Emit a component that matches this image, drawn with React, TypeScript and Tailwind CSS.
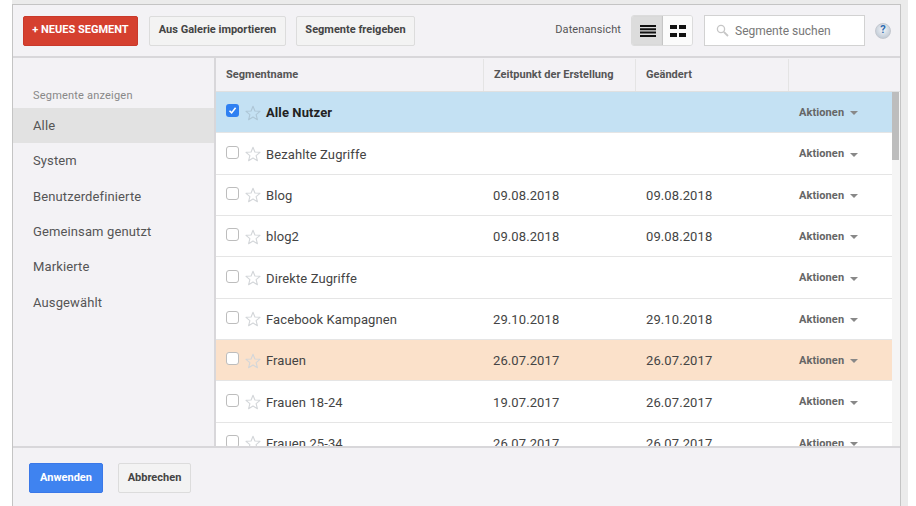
import React from "react";

const Star = ({ on }: { on?: boolean }) => (
  <svg width="16" height="16" viewBox="0 0 16 16" className="shrink-0 -mt-[1px]">
    <path d="M8 1.2 L9.9 6 L15 6.3 L11.1 9.6 L12.4 14.7 L8 12 L3.6 14.7 L4.9 9.6 L1 6.3 L6.1 6 Z" fill="none" stroke={on ? "#aec6d6" : "#d3d6d9"} strokeWidth="1.1" strokeLinejoin="round" />
  </svg>
);

const Check = ({ on }: { on?: boolean }) =>
  on ? (
    <span className="w-[13px] h-[13px] rounded-[3px] bg-[#2f80f2] flex items-center justify-center shrink-0 -mt-[5px]">
      <svg width="9" height="9" viewBox="0 0 9 9"><path d="M1.5 4.8 L3.6 6.9 L7.6 1.8" fill="none" stroke="#fff" strokeWidth="1.6" /></svg>
    </span>
  ) : (
    <span className="w-[13px] h-[13px] rounded-[3px] border border-[#bdbdbd] bg-white shrink-0 -mt-[5px]" />
  );

const rows: { n: string; a?: string; b?: string; bg?: string; bold?: boolean }[] = [
  { n: "Alle Nutzer", bg: "bg-[#c4e1f3]", bold: true },
  { n: "Bezahlte Zugriffe" },
  { n: "Blog", a: "09.08.2018", b: "09.08.2018" },
  { n: "blog2", a: "09.08.2018", b: "09.08.2018" },
  { n: "Direkte Zugriffe" },
  { n: "Facebook Kampagnen", a: "29.10.2018", b: "29.10.2018" },
  { n: "Frauen", a: "26.07.2017", b: "26.07.2017", bg: "bg-[#fbe1ca]" },
  { n: "Frauen 18-24", a: "19.07.2017", b: "26.07.2017" },
  { n: "Frauen 25-34", a: "26.07.2017", b: "26.07.2017" },
];

const side = ["System", "Benutzerdefinierte", "Gemeinsam genutzt", "Markierte", "Ausgewählt"];

const btn = "h-[30px] rounded-[2px] border border-[#dcdcdc] bg-[#f3f3f3] text-[11px] font-bold text-[#444] flex items-center justify-center";

export default function App() {
  return (
    <div className="w-[916px] h-[506px] overflow-hidden bg-white pl-3" style={{ fontFamily: "Roboto, 'Liberation Sans', sans-serif" }}>
      <div className="w-[896px] h-full bg-[#ebebeb] pt-[4px] pr-[7px] text-[#555]">
        <div className="w-[889px] h-[502px] flex flex-col bg-[#f3f2f5] border-t border-l border-r border-[#c4c4c4]">
          {/* toolbar */}
          <div className="h-[53px] shrink-0 flex items-center pl-[10px] border-b-2 border-[#d8d7da]">
            <div className={`${btn} w-[115px] !border-[#c9392b] !bg-[#d5402f] !text-white`}>+ NEUES SEGMENT</div>
            <div className={`${btn} w-[137px] ml-[11px]`}>Aus Galerie importieren</div>
            <div className={`${btn} w-[119px] ml-[10px]`}>Segmente freigeben</div>
            <span className="ml-auto text-[11px] text-[#555] tracking-[0.1px]">Datenansicht</span>
            <div className="ml-[10px] flex h-[31px] w-[62px] rounded-[3px] border border-[#dcdcdc] overflow-hidden">
              <div className="w-[31px] bg-[#dcdcdc] flex items-center justify-center shadow-[inset_-1px_0_1px_#c4c4c4]">
                <svg width="16" height="12" viewBox="0 0 16 12"><path d="M0 0h16v2H0zM0 3.3h16v2H0zM0 6.6h16v2H0zM0 10h16v2H0z" fill="#111" /></svg>
              </div>
              <div className="flex-1 bg-[#fbfbfb] flex items-center justify-center">
                <svg width="16" height="12" viewBox="0 0 16 12"><path d="M0 0h7v4H0zM9 0h7v4H9zM0 8h7v4H0zM9 8h7v4H9z" fill="#111" /></svg>
              </div>
            </div>
            <div className="ml-[11px] w-[161px] h-[31px] bg-white border border-[#d2d2d2] flex items-center pl-[11px] text-[12px] text-[#777]">
              <svg width="13" height="13" viewBox="0 0 13 13" className="mr-[6px]"><circle cx="5" cy="5" r="3.6" fill="none" stroke="#c6c6c6" strokeWidth="1.3" /><path d="M7.8 7.8 L12 12" stroke="#c6c6c6" strokeWidth="1.8" /></svg>
              Segmente suchen
            </div>
            <div className="ml-[10px] mr-[9px] w-[16px] h-[16px] rounded-full bg-[radial-gradient(circle_at_50%_40%,#f2f5f9,#b3bfcc)] border border-[#c4c8cf] flex items-center justify-center text-[11px] font-bold text-[#2f6cb0]">?</div>
          </div>
          {/* main */}
          <div className="h-[388px] shrink-0 flex min-h-0">
            <div className="w-[203px] shrink-0 border-r-2 border-[#d8d7da] pt-[31px]">
              <div className="pl-5 text-[11px] text-[#888] leading-[14px] tracking-[0.2px]">Segmente anzeigen</div>
              <div className="mt-[5px] mb-[0.5px] h-[35px] pl-5 flex items-center bg-[#e2e2e2] text-[13px] tracking-[0.12px] text-[#555]">Alle</div>
              {side.map((s) => (
                <div key={s} className="h-[35.3px] pl-5 flex items-center text-[13px] tracking-[0.12px] text-[#555]">{s}</div>
              ))}
            </div>
            <div className="flex-1 min-w-0 flex flex-col">
              <div className="h-[34px] shrink-0 pt-[1px] flex text-[11px] tracking-[0.03px] font-bold text-[#555] border-b border-[#e0e0e0]">
                <div className="w-[267px] pl-[10px] flex items-center">Segmentname</div>
                <div className="w-[152px] pl-[10px] flex items-center border-l border-[#e4e4e4]">Zeitpunkt der Erstellung</div>
                <div className="w-[153px] pl-[10px] flex items-center border-l border-[#e4e4e4]">Geändert</div>
                <div className="flex-1 border-l border-[#e4e4e4]" />
              </div>
              <div className="flex-1 min-h-0 flex overflow-hidden">
                <div className="w-[676px] shrink-0 bg-white">
                  {rows.map((r) => (
                    <div key={r.n} className={`h-[41.35px] pt-[2px] flex items-center border-b border-[#e5e5e5] text-[13px] tracking-[0.1px] text-[#444] ${r.bg ?? ""}`}>
                      <div className={`w-[267px] shrink-0 pl-[10px] flex items-center ${r.bold ? "font-bold text-[#222]" : ""}`}>
                        <Check on={r.bold} />
                        <span className="ml-[6px]"><Star on={r.bold} /></span>
                        <span className="ml-[5px]">{r.n}</span>
                      </div>
                      <div className="w-[153px] shrink-0 pl-[10px]">{r.a}</div>
                      <div className="w-[153px] shrink-0 pl-[10px]">{r.b}</div>
                      <div className="flex-1 pl-[10px] flex items-center gap-[6px] text-[11px] font-bold text-[#666]">
                        Aktionen
                        <svg width="8" height="4" viewBox="0 0 8 4"><path d="M0 0h8L4 4z" fill="#888" /></svg>
                      </div>
                    </div>
                  ))}
                </div>
                <div className="flex-1 bg-[#f5f5f5]">
                  <div className="w-[7px] h-[68px] bg-[#bdbdbd]" />
                </div>
              </div>
            </div>
          </div>
          {/* footer */}
          <div className="flex-1 border-t-2 border-[#d8d7da] flex items-start pt-[15px] pl-[16px]">
            <div className={`${btn} w-[74px] !border-[#3a78e8] !bg-[#3f83f0] !text-white`}>Anwenden</div>
            <div className={`${btn} w-[73px] ml-[15px]`}>Abbrechen</div>
          </div>
        </div>
      </div>
    </div>
  );
}
